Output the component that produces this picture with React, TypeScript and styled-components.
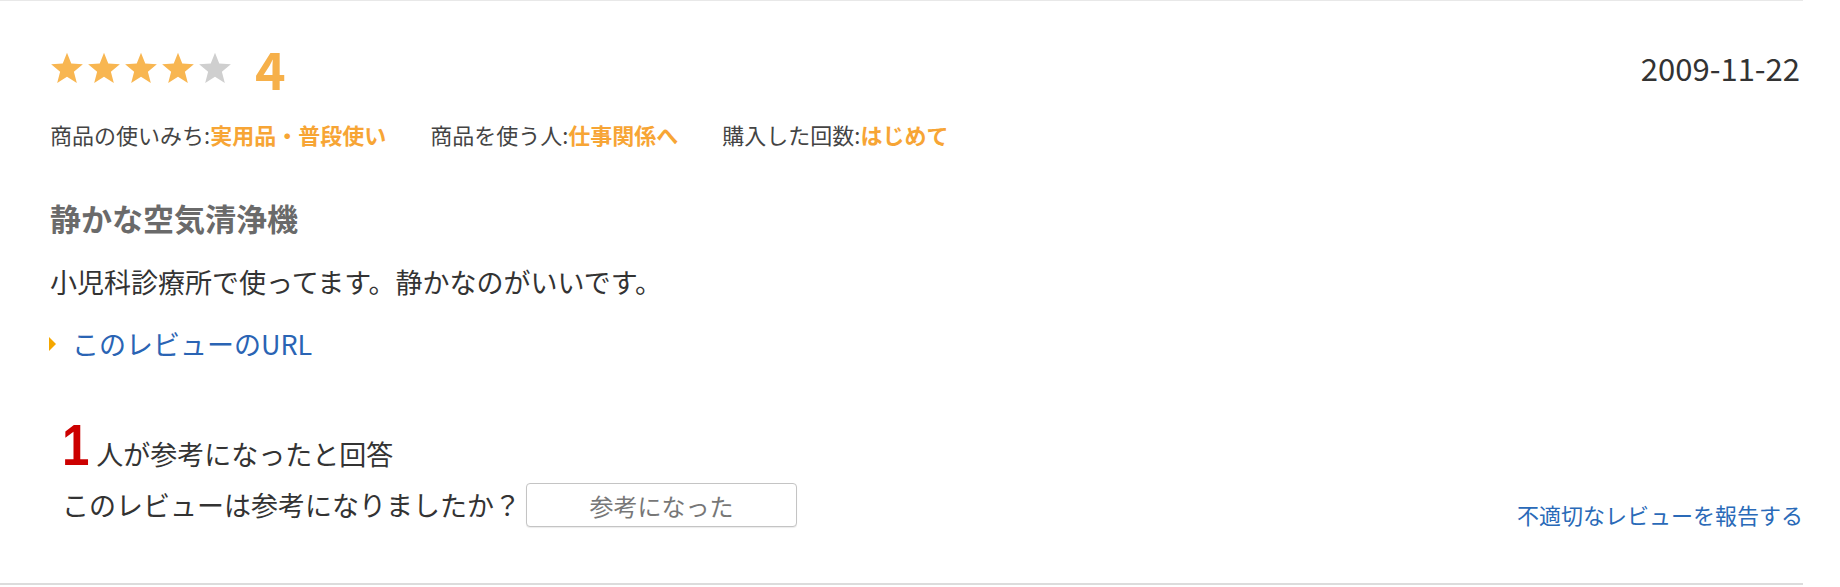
import React from "react";
import styled, { createGlobalStyle } from "styled-components";

const GlobalStyle = createGlobalStyle`
  body {
    margin: 0;
    background: #fff;
    font-family: "Noto Sans CJK JP", "Noto Sans", sans-serif;
    color: #333;
  }
`;

const REVIEW = {
  rating: 4,
  date: "2009-11-22",
  meta: [
    { label: "商品の使いみち:", value: "実用品・普段使い" },
    { label: "商品を使う人:", value: "仕事関係へ" },
    { label: "購入した回数:", value: "はじめて" },
  ],
  title: "静かな空気清浄機",
  body: "小児科診療所で使ってます。静かなのがいいです。",
  helpful: 1,
};

const Star = ({ on }: { on: boolean }) => (
  <StarSvg viewBox="0 0 24 23" $on={on}>
    <polygon points="12,0.5 15.06,8.29 23.41,8.79 16.95,14.11 19.05,22.21 12,17.7 4.95,22.21 7.05,14.11 0.59,8.79 8.94,8.29" />
  </StarSvg>
);

const App = () => {
  const { rating, date, meta, title, body, helpful } = REVIEW;

  return (
    <>
      <GlobalStyle />
      <Wrapper>
        <Header>
          <Rating>
            <Stars>
              {[0, 1, 2, 3, 4].map((i) => (
                <Star key={i} on={i < rating} />
              ))}
            </Stars>
            <Score>{rating}</Score>
          </Rating>
          <DateText>{date}</DateText>
        </Header>

        <MetaRow>
          {meta.map((item) => (
            <MetaItem key={item.label}>
              {item.label}
              <MetaValue>{item.value}</MetaValue>
            </MetaItem>
          ))}
        </MetaRow>

        <Title>{title}</Title>
        <Body>{body}</Body>
        <UrlLink href="#">このレビューのURL</UrlLink>

        <Helpful>
          <HelpfulCount>
            <Count>{helpful}</Count>
            人が参考になったと回答
          </HelpfulCount>
          <VoteRow>
            <Question>このレビューは参考になりましたか？</Question>
            <VoteButton type="button">参考になった</VoteButton>
            <Report href="#">不適切なレビューを報告する</Report>
          </VoteRow>
        </Helpful>
      </Wrapper>
    </>
  );
};

const Wrapper = styled.div`
  width: 1803px;
  box-sizing: border-box;
  padding: 47px 0 56px 50px;
  border-top: 1px solid #e8e8e8;
  border-bottom: 2px solid #dcdcdc;
`;

const Header = styled.div`
  display: flex;
  align-items: center;
  justify-content: space-between;
  height: 40px;
  padding-right: 3px;
`;

const Rating = styled.div`
  display: flex;
  align-items: center;
`;

const Stars = styled.div`
  display: flex;
  gap: 3px;
`;

const StarSvg = styled.svg<{ $on: boolean }>`
  width: 34px;
  height: 32px;
  display: block;
  fill: ${({ $on }) => ($on ? "#f8b651" : "#cfcfcf")};
`;

const Score = styled.span`
  margin-left: 23px;
  font-size: 52px;
  font-weight: 700;
  line-height: 40px;
  color: #f6b04a;
`;

const DateText = styled.span`
  font-size: 31px;
  line-height: 40px;
  color: #333;
`;

const MetaRow = styled.div`
  display: flex;
  gap: 44px;
  margin-top: 31px;
  font-size: 22px;
  line-height: 30px;
  color: #444;
`;

const MetaItem = styled.div``;

const MetaValue = styled.span`
  font-weight: 700;
  color: #f7a535;
`;

const Title = styled.h2`
  margin: 49px 0 0;
  font-size: 31px;
  font-weight: 700;
  line-height: 40px;
  color: #6a6a6a;
`;

const Body = styled.p`
  margin: 26px 0 0;
  font-size: 27px;
  line-height: 36px;
  color: #333;
`;

const UrlLink = styled.a`
  display: flex;
  align-items: center;
  margin-top: 26px;
  font-size: 27px;
  line-height: 36px;
  color: #2a64b4;
  text-decoration: none;

  &::before {
    content: "";
    width: 0;
    height: 0;
    margin: 0 16px 0 -1px;
    border-top: 7px solid transparent;
    border-bottom: 7px solid transparent;
    border-left: 7px solid #f5a700;
  }
`;

const Helpful = styled.div`
  margin-top: 58px;
  padding-left: 12px;
`;

const HelpfulCount = styled.div`
  display: flex;
  align-items: baseline;
  height: 50px;
  font-size: 27px;
  color: #333;
`;

const Count = styled.span`
  display: inline-block;
  margin-right: 2px;
  font-family: "Liberation Sans", Arial, sans-serif;
  font-size: 58px;
  font-weight: 700;
  line-height: 50px;
  color: #cc0000;
  transform: scaleX(0.85);
  transform-origin: left bottom;
`;

const VoteRow = styled.div`
  display: flex;
  align-items: center;
  margin-top: 13px;
`;

const Question = styled.span`
  font-size: 27px;
  line-height: 36px;
  color: #333;
`;

const VoteButton = styled.button`
  width: 271px;
  height: 44px;
  margin-left: 5px;
  border: 1px solid #c4c4c4;
  border-radius: 4px;
  background: #fff;
  box-shadow: 0 1px 1px rgba(0, 0, 0, 0.08);
  font-family: "Noto Sans CJK JP", sans-serif;
  font-size: 24px;
  color: #777;
`;

const Report = styled.a`
  align-self: flex-end;
  margin-left: auto;
  font-size: 22px;
  line-height: 26px;
  color: #2a6ab8;
  text-decoration: none;
`;

export default App;
